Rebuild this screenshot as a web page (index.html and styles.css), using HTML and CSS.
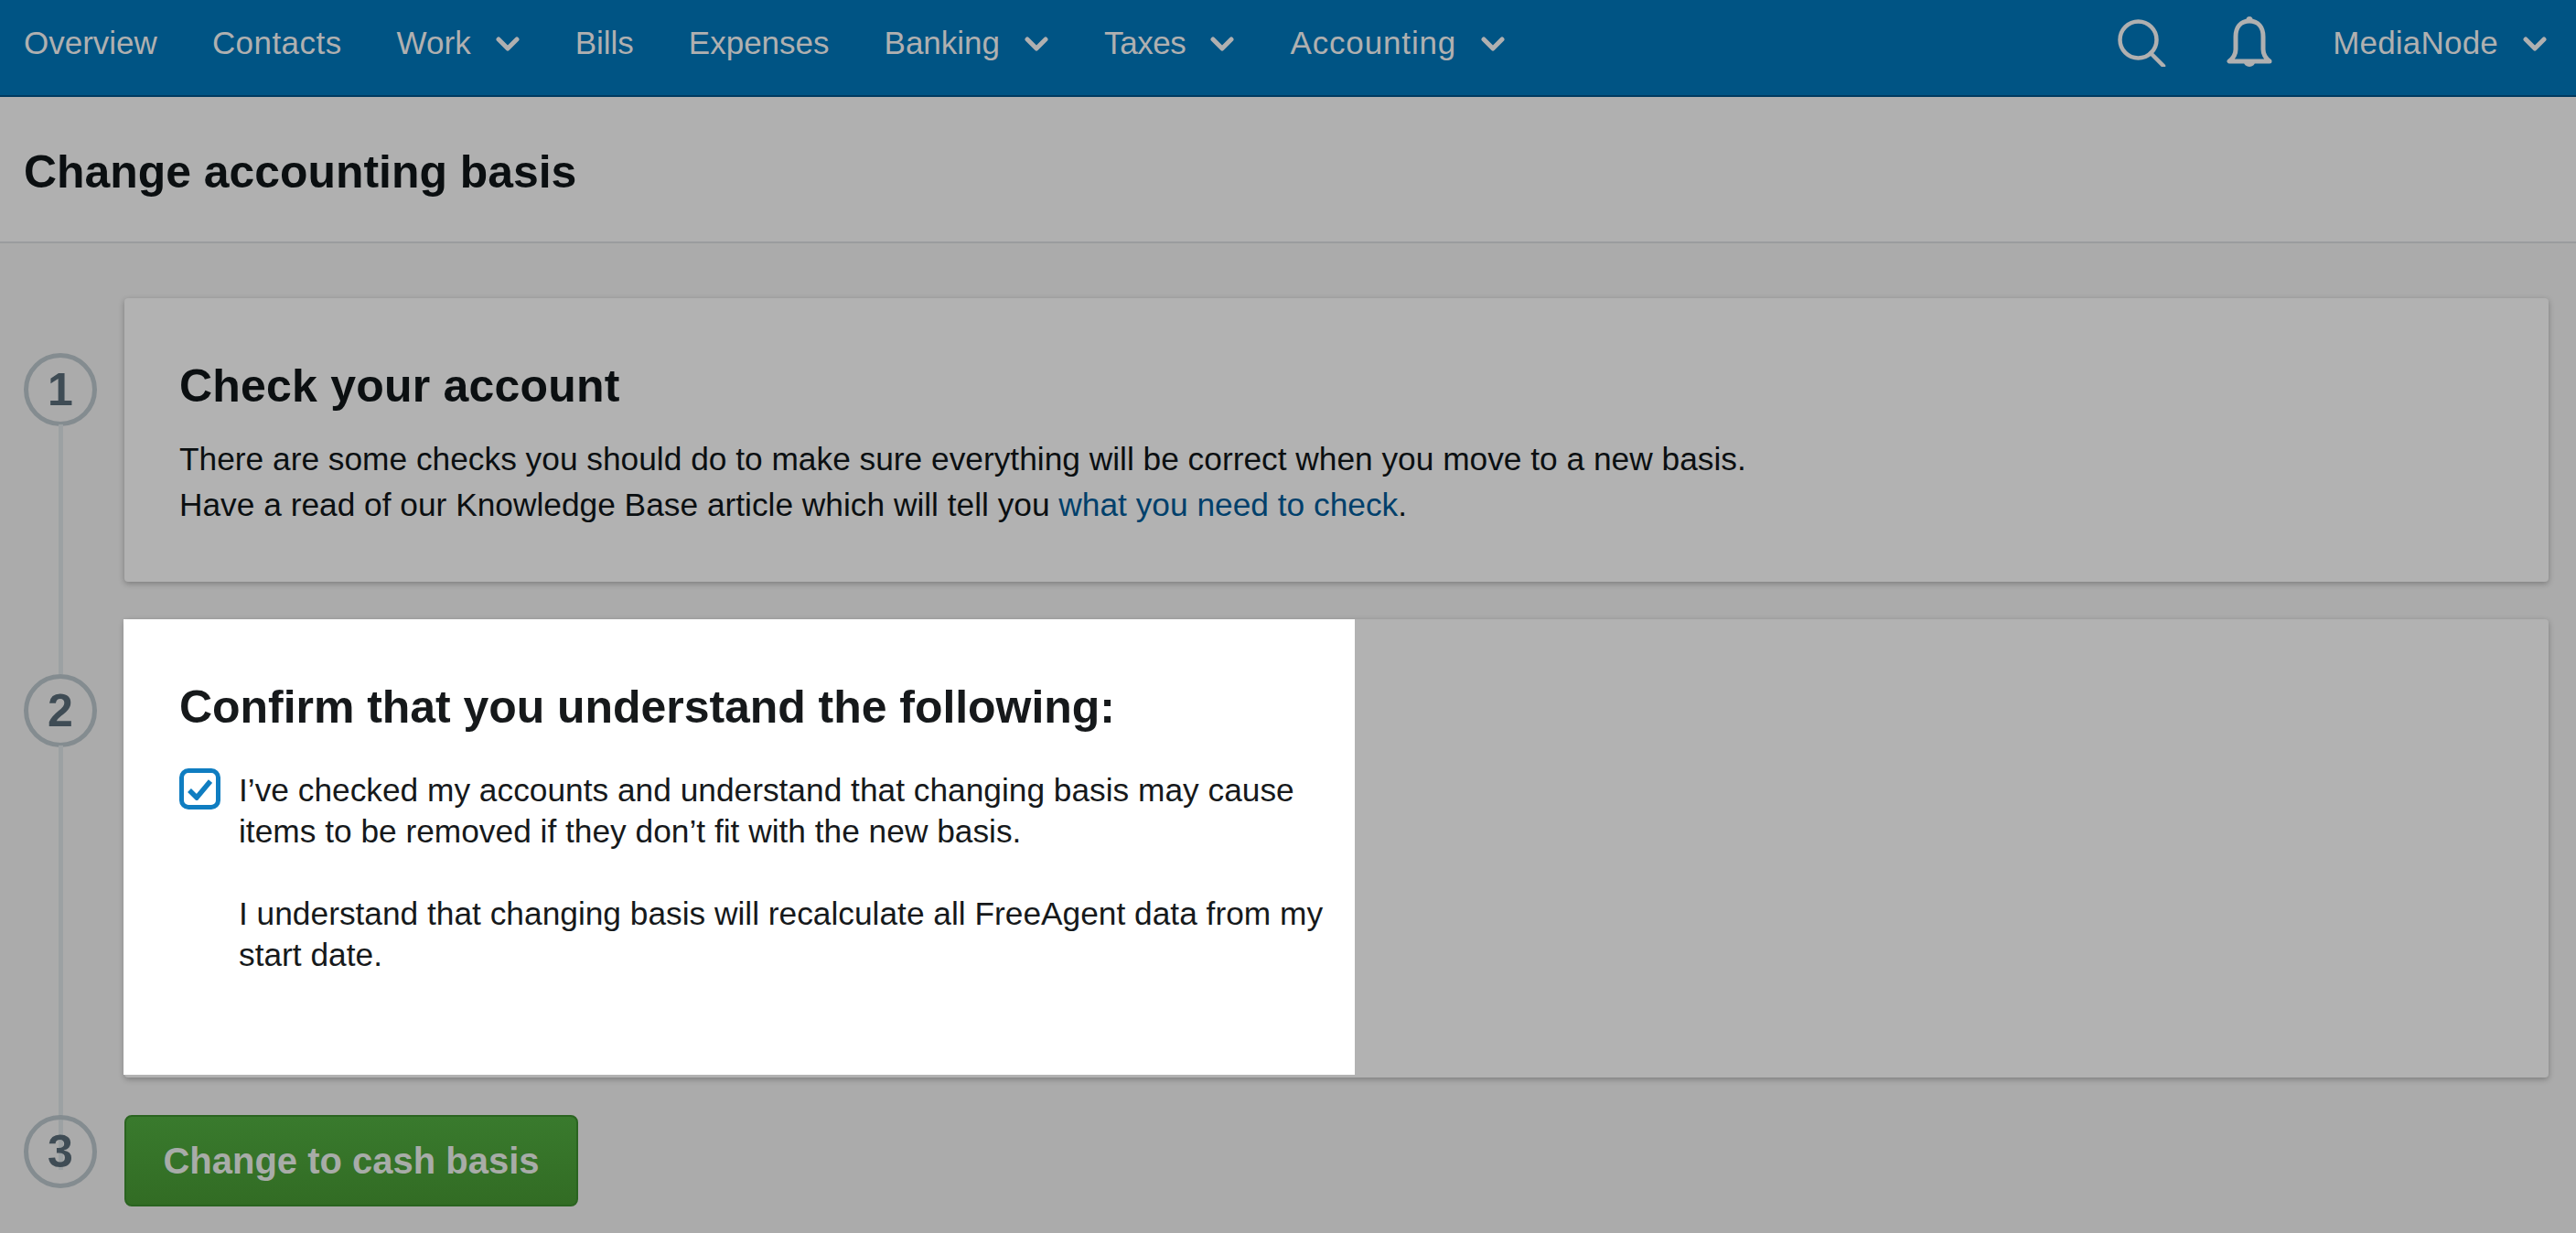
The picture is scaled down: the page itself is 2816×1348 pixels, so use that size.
FILE: index.html
```html
<!DOCTYPE html>
<html lang="en">
<head>
<meta charset="utf-8">
<title>Change accounting basis</title>
<link rel="stylesheet" href="styles.css">
</head>
<body>
<nav class="nav">
  <ul class="nav-main">
    <li class="nav-item">Overview</li>
    <li class="nav-item nav-wide">Contacts</li>
    <li class="nav-item">Work <svg class="chev" viewBox="0 0 26 16"><path d="M3 3l10 10L23 3"/></svg></li>
    <li class="nav-item">Bills</li>
    <li class="nav-item">Expenses</li>
    <li class="nav-item">Banking <svg class="chev" viewBox="0 0 26 16"><path d="M3 3l10 10L23 3"/></svg></li>
    <li class="nav-item nav-tight">Taxes <svg class="chev" viewBox="0 0 26 16"><path d="M3 3l10 10L23 3"/></svg></li>
    <li class="nav-item nav-wider">Accounting <svg class="chev" viewBox="0 0 26 16"><path d="M3 3l10 10L23 3"/></svg></li>
  </ul>
  <div class="nav-side">
    <svg class="ico-search" viewBox="0 0 53 52"><circle cx="22.500" cy="22.500" r="20"/><path d="M36 37l14 14"/></svg>
    <svg class="ico-bell" viewBox="0 0 50 55"><path d="M25 5c-10 0-15 7-15 17v14c0 5-2 9-7 13h44c-5-4-7-8-7-13V22c0-10-5-17-15-17z"/><circle class="dot" cx="25" cy="3.500" r="3.500"/><path class="dot" d="M19 50h12a6 5 0 0 1-12 0z"/></svg>
    <div class="nav-item nav-user">MediaNode <svg class="chev" viewBox="0 0 26 16"><path d="M3 3l10 10L23 3"/></svg></div>
  </div>
</nav>
<header class="page-head"><h1 class="page-title">Change accounting basis</h1></header>
<main class="steps">
  <section class="step">
    <div class="marker"><span class="circle">1</span></div>
    <div class="card card-one">
      <h2 class="card-title">Check your account</h2>
      <p class="card-text">There are some checks you should do to make sure everything will be correct when you move to a new basis.<br>Have a read of our Knowledge Base article which will tell you <a class="link" href="#">what you need to check</a>.</p>
    </div>
  </section>
  <section class="step">
    <div class="marker"><span class="circle">2</span></div>
    <div class="card card-two">
      <div class="spot">
        <h2 class="card-title">Confirm that you understand the following:</h2>
        <div class="check-row">
          <span class="checkbox"><svg viewBox="0 0 27 24"><path d="M2 13l8 8L25 3"/></svg></span>
          <div class="check-text">
            <p class="check-para">I’ve checked my accounts and understand that changing basis may cause items to be removed if they don’t fit with the new basis.</p>
            <p class="check-para">I understand that changing basis will recalculate all FreeAgent data from my start date.</p>
          </div>
        </div>
      </div>
    </div>
  </section>
  <section class="step step-last">
    <div class="marker marker-last"><span class="circle">3</span></div>
    <button class="btn" type="button">Change to cash basis</button>
  </section>
</main>
</body>
</html>
```
FILE: styles.css
```css
* { box-sizing: border-box; }
html, body { margin: 0; padding: 0; height: 100%; }
body {
  background: #ababab;
  color: #0b0f11;
  font-family: "Liberation Sans", Arial, sans-serif;
  font-size: 35px;
  overflow: hidden;
}
.nav {
  height: 106px;
  background: #005484;
  border-bottom: 2px solid #003a60;
  display: flex;
  justify-content: space-between;
  align-items: flex-start;
  padding: 0 32px 0 26px;
  color: #b0b0b0;
}
.nav-main {
  display: flex;
  gap: 60px;
  margin: 0;
  padding: 26px 0 0;
  list-style: none;
}
.nav-item {
  display: flex;
  align-items: center;
  gap: 27px;
  font-size: 35px;
  line-height: 42px;
  white-space: nowrap;
}
.nav-wide { letter-spacing: .45px; }
.nav-tight { letter-spacing: -.4px; }
.nav-wider { letter-spacing: .85px; }
.chev { width: 26px; height: 16px; margin: 2px 1px 0 0; }
.nav-user .chev { margin-right: 0; }
.chev path { fill: none; stroke: #b0b0b0; stroke-width: 5; stroke-linecap: round; stroke-linejoin: round; }
.nav-side { display: flex; align-items: flex-start; padding-top: 18px; }
.ico-search { width: 53px; height: 52px; margin: 3px 66px 0 0; }
.ico-search circle, .ico-search path { fill: none; stroke: #b0b0b0; stroke-width: 4.500; stroke-linecap: round; }
.ico-bell { width: 50px; height: 55px; margin-right: 66px; }
.ico-bell path { fill: none; stroke: #b0b0b0; stroke-width: 5; stroke-linejoin: round; }
.ico-bell .dot { fill: #b0b0b0; stroke: none; }
.nav-user { padding-top: 8px; letter-spacing: .2px; }
.page-head {
  height: 160px;
  background: #b0b0b0;
  border-bottom: 2px solid #9a9c9e;
  display: flex;
  align-items: center;
  padding: 6px 26px 0;
}
.page-title { margin: 0; font-size: 49.900px; font-weight: 700; line-height: 60px; }
.steps { padding: 60px 30px 0 26px; display: flex; flex-direction: column; gap: 41px; }
.step { display: flex; gap: 30px; position: relative; }
.marker { width: 80px; flex: none; position: relative; padding-top: 60px; }
.marker-last { padding-top: 0; }
.marker::after {
  content: "";
  position: absolute;
  left: 38px;
  top: 138px;
  width: 5px;
  height: calc(100% - 37px);
  background: #9ca1a3;
}
.marker-last::after { display: none; }
.circle {
  display: flex;
  align-items: center;
  justify-content: center;
  width: 80px;
  height: 80px;
  border: 5px solid #848c90;
  border-radius: 50%;
  font-size: 50px;
  font-weight: 700;
  color: #3f4c55;
}
.card {
  flex: 1;
  background: #b2b2b2;
  border-radius: 4px;
  box-shadow: 0 2px 6px rgba(0, 0, 0, .28);
}
.card-one { height: 310px; padding: 66px 60px 0; }
.card-two { height: 501px; }
.card-title { margin: 0; font-size: 50px; font-weight: 700; line-height: 60px; }
.card-one .card-title { letter-spacing: .2px; }
.card-two .card-title { letter-spacing: -.05px; }
.card-text { margin: 25px 0 0; font-size: 35.300px; line-height: 50px; }
.link { color: #00406b; text-decoration: none; }
.spot {
  width: 1346px;
  height: 498px;
  margin-left: -1px;
  background: #fff;
  padding: 66px 20px 0 61px;
  color: #16191b;
}
.check-row { display: flex; gap: 20px; margin-top: 37px; }
.checkbox {
  flex: none;
  display: flex;
  align-items: center;
  justify-content: center;
  width: 45px;
  height: 45px;
  border: 5px solid #0f7dc1;
  border-radius: 10px;
}
.checkbox svg { width: 27px; height: 24px; }
.checkbox path { fill: none; stroke: #0f7dc1; stroke-width: 5.500; }
.check-text { padding-top: 1px; }
.check-para { margin: 0 0 45px; font-size: 35.300px; line-height: 45px; }
.btn {
  width: 496px;
  height: 100px;
  background: linear-gradient(#397a2d, #326c24);
  border: 2px solid #2a6420;
  border-radius: 8px;
  color: #a8aca8;
  font: 700 40px/1 "Liberation Sans", Arial, sans-serif;
  padding: 0;
}
```
